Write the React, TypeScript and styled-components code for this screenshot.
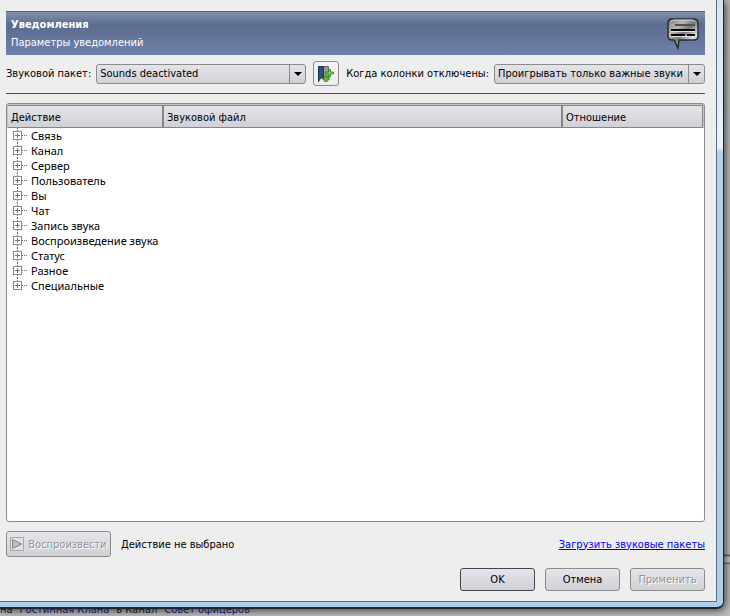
import React from "react";
import styled, { createGlobalStyle } from "styled-components";

const GlobalStyle = createGlobalStyle`
  *, *::before, *::after { box-sizing: border-box; }
  body {
    margin: 0;
    color: #000;
    font: 11px/15px "DejaVu Sans Condensed", "DejaVu Sans", sans-serif;
  }
  button, select { font: inherit; color: inherit; }
`;

const face = "linear-gradient(#e4e5ea, #d0d0d6)";

const Desktop = styled.div`
  min-height: 100vh;
  display: flex;
  flex-direction: column;
  background: linear-gradient(#bcbcbc, #bcbcbc 554px, #6c6c6c 555px, #6c6c6c 556px, #c8c8c8 557px, #c8c8c8 562px, #6c6c6c 563px, #bcbcbc 565px);
  overflow: hidden;
`;

const WindowFrame = styled.div`
  flex: 1;
  display: flex;
  margin-right: 6px;
  padding: 0 6px 5px 0;
  border: solid #20262e;
  border-width: 0 1px 2px 0;
  border-bottom-right-radius: 7px;
  background: linear-gradient(#d3e4f5, #e9f2fa 148px, #b2cfec 152px, #b0cdea);
  box-shadow: 1px 1px 8px rgba(0, 0, 0, 0.75);
`;

const Dialog = styled.main`
  flex: 1;
  min-width: 0;
  display: flex;
  flex-direction: column;
  padding: 11px 11px 10px 6px;
  border: solid #5b6b7c;
  border-width: 0 1px 1px 0;
  background: #eee;
`;

const Banner = styled.header`
  display: flex;
  align-items: center;
  justify-content: space-between;
  height: 44px;
  padding: 0 6px 0 5px;
  border-top: 1px solid #526583;
  color: #fff;
  background: linear-gradient(#8090ae, #5b6c8e 13px, #6f80ad);
`;

const Title = styled.h1`
  margin: 0 0 3px;
  font-size: 11px;
  line-height: 15px;
`;

const Subtitle = styled.p`
  margin: 0;
`;

const Toolbar = styled.div`
  display: flex;
  align-items: center;
  margin-top: 6px;
  padding-bottom: 7px;
  border-bottom: 1px solid #4c4c4c;
  white-space: nowrap;
`;

const SelectBox = styled.div<{ $grow?: boolean }>`
  position: relative;
  flex: ${(p) => (p.$grow ? "1 1 210px" : "0 0 210px")};
  min-width: 0;
  height: 20px;
  margin-left: 5px;
`;

const Select = styled.select`
  display: block;
  appearance: none;
  width: 100%;
  height: 20px;
  padding: 0 18px 0 3px;
  border: 1px solid #8b8b8b;
  border-radius: 3px;
  background: ${face};
`;

const SelectArrow = styled.span`
  position: absolute;
  inset: 1px 1px 1px auto;
  display: flex;
  align-items: center;
  justify-content: center;
  width: 16px;
  border-left: 1px solid #8b8b8b;
  pointer-events: none;
`;

const AddButton = styled.button`
  display: flex;
  align-items: center;
  justify-content: center;
  flex: none;
  width: 26px;
  height: 25px;
  margin: 0 7px;
  padding: 0;
  border: 1px solid #8b8b8b;
  border-radius: 3px;
  background: linear-gradient(#f6f6f6, #ececee);
`;

const TreePane = styled.section`
  flex: 1;
  margin-top: 9px;
  padding: 1px 1px 0;
  border: 1px solid #8b8b8b;
  border-radius: 3px;
  background: #fff linear-gradient(#c4c4c4, #c4c4c4) top / 100% 24px no-repeat;
`;

const TreeTable = styled.table`
  width: 100%;
  table-layout: fixed;
  border-collapse: separate;
  border-spacing: 0;
`;

const Column = styled.col<{ $share?: string }>`
  width: ${(p) => p.$share ?? "auto"};
`;

const HeaderCell = styled.th`
  height: 23px;
  padding: 1px 3px 0;
  border: solid #868686;
  border-width: 1px 1px 1px 0;
  text-align: left;
  font-weight: normal;
  background: ${face};

  & + & {
    border-left-width: 1px;
  }
`;

const TreeCell = styled.td`
  padding: 0 0 0 3px;
  font-family: "Noto Sans", sans-serif;
  white-space: nowrap;
`;

const TreeNode = styled.div`
  display: flex;
  align-items: center;
  height: 15px;
`;

const Expander = styled.button`
  display: flex;
  flex: none;
  width: 20px;
  height: 15px;
  padding: 0;
  border: 0;
  background: none;
`;

const ActionBar = styled.div`
  display: flex;
  align-items: center;
  gap: 10px;
  margin-top: 9px;
`;

const Button = styled.button<{ $wide?: boolean; $primary?: boolean }>`
  display: flex;
  align-items: center;
  justify-content: center;
  gap: 4px;
  width: ${(p) => (p.$wide ? "105px" : "75px")};
  height: ${(p) => (p.$wide ? "26px" : "23px")};
  padding: 0;
  border: 1px solid ${(p) => (p.$primary ? "#43474c" : "#8b8b8b")};
  border-radius: 3px;
  background: ${face};
  white-space: nowrap;

  &:disabled {
    color: #939393;
    text-shadow: 1px 1px #fff;
  }
`;

const Link = styled.a`
  margin-left: auto;
  color: #00f;
`;

const DialogButtons = styled.footer`
  display: flex;
  justify-content: flex-end;
  gap: 10px;
  margin-top: 11px;
`;

const ChatStrip = styled.div`
  display: flex;
  align-items: flex-end;
  gap: 7px;
  height: 7px;
  overflow: hidden;
  color: #101010;
  line-height: 13px;
  white-space: nowrap;
`;

const ChatName = styled.span`
  color: #10106c;
`;

const Arrow = () => (
  <SelectArrow>
    <svg width="8" height="4" viewBox="0 0 8 4" aria-hidden="true">
      <path d="M0 0h8L4 4z" fill="#000" />
    </svg>
  </SelectArrow>
);

const BubbleIcon = () => (
  <svg width="32" height="34" viewBox="0 0 32 34" aria-hidden="true">
    <defs>
      <linearGradient id="bubble" x1="0" y1="0" x2="1" y2="1">
        <stop offset="0" stopColor="#777" />
        <stop offset="0.3" stopColor="#b8b8b8" />
        <stop offset="0.5" stopColor="#777" />
        <stop offset="0.75" stopColor="#ddd" />
        <stop offset="1" stopColor="#888" />
      </linearGradient>
    </defs>
    <path
      d="M5 2h22q4 0 4 4v13q0 4-4 4H12l-1 8-4-8H5q-4 0-4-4V6q0-4 4-4z"
      fill="url(#bubble)"
      stroke="#292b30"
      strokeWidth="1.5"
    />
    <path d="M4 5q1-2 3-2h18q2 0 3 2" fill="none" stroke="#d0d0d0" />
    <path d="M8 8h20" stroke="#505050" strokeWidth="2" />
    <path d="M4 8h3" stroke="#aaa" strokeWidth="2" />
    <path d="M4 13h24M4 18h14M20 18h8" stroke="#050505" strokeWidth="2" />
    <path d="M4 14.500h24M4 19.500h24" stroke="#e4e4e4" />
  </svg>
);

const PackIcon = () => (
  <svg width="16" height="16" viewBox="0 0 16 16" aria-hidden="true">
    <path d="M5.500.500h5V13L8 11l-2.500 2z" fill="#9a9a9a" stroke="#666" />
    <path d="M.500.500h5V13L3 11.500.500 15.500z" fill="#2c517f" stroke="#1d3555" />
    <path
      d="M10.500 3.500h2v2.500h3v2h-3v3h-2V8h-3V6h3z"
      fill="#72dc3a"
      stroke="#2c7c1c"
      strokeWidth="0.8"
    />
    <path
      d="M7 10h2v2h2v2H9v2H7v-2H5v-2h2z"
      fill="#65cc34"
      stroke="#2c7c1c"
      strokeWidth="0.8"
    />
  </svg>
);

const PlayIcon = () => (
  <svg width="14" height="14" viewBox="0 0 14 14" aria-hidden="true">
    <path d="M.500.500h13v13H.500z" fill="#e2e2e4" stroke="#a6a6a6" />
    <path d="M2.500 2.500 11.500 7l-9 4.500z" fill="#bdbdbd" stroke="#858585" />
  </svg>
);

const BranchIcon = ({ last }: { last: boolean }) => (
  <svg width="16" height="15" viewBox="0 0 16 15" aria-hidden="true">
    <path d="M6.500 0v3" stroke="#707070" strokeDasharray="1 1" />
    {!last && <path d="M6.500 12v3" stroke="#707070" strokeDasharray="1 1" />}
    <path d="M11 7.500h5" stroke="#707070" strokeDasharray="1 1" />
    <rect x="2.500" y="3.500" width="8" height="8" fill="#fff" stroke="#8c8c8c" />
    <path d="M4 7.500h5M6.500 5v5" stroke="#777" />
  </svg>
);

const categories = [
  "Связь",
  "Канал",
  "Сервер",
  "Пользователь",
  "Вы",
  "Чат",
  "Запись звука",
  "Воспроизведение звука",
  "Статус",
  "Разное",
  "Специальные",
];

export default function App() {
  return (
    <Desktop>
      <GlobalStyle />
      <WindowFrame>
        <Dialog>
          <Banner>
            <div>
              <Title>Уведомления</Title>
              <Subtitle>Параметры уведомлений</Subtitle>
            </div>
            <BubbleIcon />
          </Banner>
          <Toolbar>
            <label htmlFor="pack">Звуковой пакет:</label>
            <SelectBox>
              <Select id="pack">
                <option>Sounds deactivated</option>
              </Select>
              <Arrow />
            </SelectBox>
            <AddButton type="button" aria-label="Добавить пакет">
              <PackIcon />
            </AddButton>
            <label htmlFor="muted">Когда колонки отключены:</label>
            <SelectBox $grow>
              <Select id="muted">
                <option>Проигрывать только важные звуки</option>
              </Select>
              <Arrow />
            </SelectBox>
          </Toolbar>
          <TreePane>
            <TreeTable>
              <colgroup>
                <Column $share="22.3%" />
                <Column $share="57.4%" />
                <Column />
              </colgroup>
              <thead>
                <tr>
                  <HeaderCell>Действие</HeaderCell>
                  <HeaderCell>Звуковой файл</HeaderCell>
                  <HeaderCell>Отношение</HeaderCell>
                </tr>
              </thead>
              <tbody>
                {categories.map((name, i) => (
                  <tr key={name}>
                    <TreeCell>
                      <TreeNode>
                        <Expander type="button" aria-label={name}>
                          <BranchIcon last={i === categories.length - 1} />
                        </Expander>
                        {name}
                      </TreeNode>
                    </TreeCell>
                    <td />
                    <td />
                  </tr>
                ))}
              </tbody>
            </TreeTable>
          </TreePane>
          <ActionBar>
            <Button type="button" $wide disabled>
              <PlayIcon />
              Воспроизвести
            </Button>
            <span>Действие не выбрано</span>
            <Link href="#packs">Загрузить звуковые пакеты</Link>
          </ActionBar>
          <DialogButtons>
            <Button type="button" $primary>OK</Button>
            <Button type="button">Отмена</Button>
            <Button type="button" disabled>Применить</Button>
          </DialogButtons>
        </Dialog>
      </WindowFrame>
      <ChatStrip>
        <span>на</span>
        <ChatName>Гостинная Клана</ChatName>
        <span>в Канал</span>
        <ChatName>Совет офицеров</ChatName>
      </ChatStrip>
    </Desktop>
  );
}
